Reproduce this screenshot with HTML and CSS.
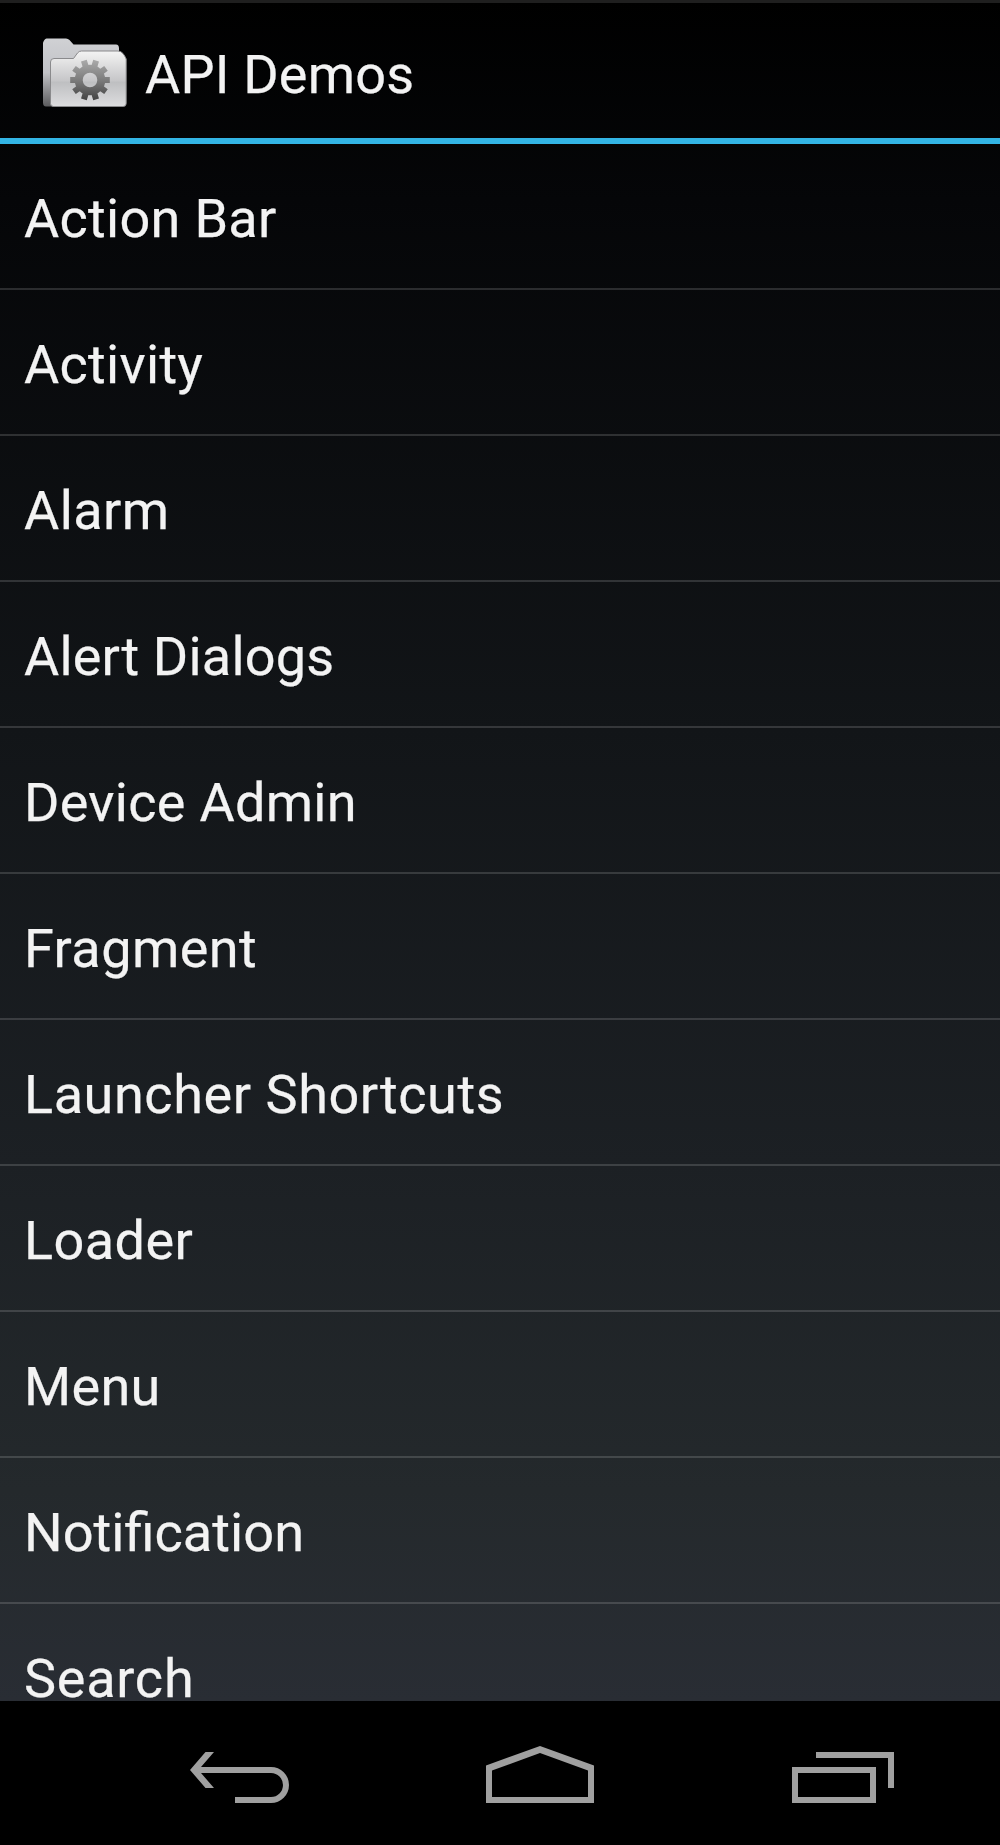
FILE: index.html
```html
<!DOCTYPE html>
<html lang="en">
<head>
<meta charset="utf-8">
<title>API Demos</title>
<link rel="stylesheet" href="styles.css">
</head>
<body>
<div class="screen">
  <header class="action-bar">
    <svg class="app-icon" viewBox="40 35 90 75" aria-hidden="true">
      <defs>
        <linearGradient id="back" x1="0" y1="0" x2="0" y2="1">
          <stop offset="0" stop-color="#d0d1d4"/><stop offset=".5" stop-color="#c2c3c7"/><stop offset="1" stop-color="#5c5c5e"/>
        </linearGradient>
        <linearGradient id="front" x1="0" y1="0" x2="0" y2="1">
          <stop offset="0" stop-color="#f4f4f4"/><stop offset=".3" stop-color="#dadadb"/><stop offset=".54" stop-color="#c6c6c8"/><stop offset=".56" stop-color="#bebfc1"/><stop offset="1" stop-color="#dddddf"/>
        </linearGradient>
        <linearGradient id="gear" gradientUnits="userSpaceOnUse" x1="0" y1="60" x2="0" y2="100">
          <stop offset="0" stop-color="#aaa"/><stop offset=".5" stop-color="#7c7c7c"/><stop offset="1" stop-color="#434343"/>
        </linearGradient>
      </defs>
      <path fill="url(#back)" d="M46.500 38.500H66q2 0 3.500 1.500l4 4.500H116q3 0 3 4V106.500H46q-3 0-3-4V43q1-4 3.500-4.500z"/>
      <path fill="url(#front)" stroke="#8a8a8c" stroke-width="1" d="M54 58.500H73.500l4-5.500q1.500-2 4-2H118q3 0 5 2.500t3.200 5.500V103.500q0 3-3 3H53.500q-3 0-3-3V62q0-3.500 3.500-3.500z"/>
      <!-- ten rounded teeth around a ring -->
      <g fill="none" stroke="url(#gear)">
        <circle cx="90" cy="80" r="11.300" stroke-width="8"/>
        <path stroke-width="6" d="M76 80.010H70.200M104 80H109.800M78.700 88.200L74 91.600M101.300 71.800L106 68.400M85.700 93.300L83.900 99.300M94.300 66.700L96.100 60.700M94.300 93.300L96.100 99.300M85.700 66.700L83.900 60.700M101.300 88.200L106 91.600M78.700 71.800L74 68.400"/>
      </g>
    </svg>
    <h1 class="title">API Demos</h1>
  </header>
  <ul class="list">
    <li class="row">Action Bar</li>
    <li class="row">Activity</li>
    <li class="row wide">Alarm</li>
    <li class="row tight">Alert Dialogs</li>
    <li class="row">Device Admin</li>
    <li class="row wide">Fragment</li>
    <li class="row wider">Launcher Shortcuts</li>
    <li class="row wide">Loader</li>
    <li class="row">Menu</li>
    <li class="row ligature">Notification</li>
    <li class="row widest">Search</li>
  </ul>
</div>
<nav class="nav-bar">
  <svg class="back" width="99" height="144" viewBox="0 0 99 144" role="img" aria-label="Back">
    <path fill="#a0a0a0" d="M0 69L15.500 51H24L11 66H81a18 18 0 0 1 0 36H45V96H81a12 12 0 0 0 0-24H11L24 87H15.500z"/>
  </svg>
  <svg class="home" width="108" height="144" viewBox="0 0 108 144" role="img" aria-label="Home">
    <path fill="#a0a0a0" fill-rule="evenodd" d="M54 45L108 64.500V102H0V64.500zM54 52L6 69.500V96H102V69.500z"/>
  </svg>
  <svg width="102" height="144" viewBox="0 0 102 144" role="img" aria-label="Recent apps">
    <path fill="#a0a0a0" fill-rule="evenodd" d="M0 66H84V102H0zM6 72V96H78V72zM24 51H102V87H96V57H24z"/>
  </svg>
</nav>
</body>
</html>
```
FILE: styles.css
```css
* { box-sizing: border-box; }
body {
  margin: 0;
  width: 1000px;
  height: 1845px;
  overflow: hidden;
  background: #000;
  color: #f3f3f3;
  font-family: Roboto, sans-serif;
  font-size: 54px;
  -webkit-text-stroke: .25px #f3f3f3;
}
.screen {
  height: 1701px;
  overflow: hidden;
  background: linear-gradient(#000 0, #050608 200px, #121518 730px, #1c2024 1164px, #24292c 1490px, #292d34 1701px);
}
.action-bar {
  display: flex;
  align-items: center;
  height: 144px;
  padding-left: 40px;
  border-top: 3px solid #1f1f1f;
  border-bottom: 6px solid #33b5e5;
}
.app-icon { width: 90px; height: 75px; margin-top: 4px; }
.title {
  margin: 8px 0 0 15px;
  font-size: 54px;
  font-weight: 400;
  line-height: 63px;
  letter-spacing: .2px;
}
.list { margin: 0; padding: 0; list-style: none; }
.row {
  height: 146px;
  padding: 5px 0 0 24px;
  line-height: 139px;
  letter-spacing: .3px;
  border-bottom: 2px solid rgba(255, 255, 255, .15);
}
.tight { letter-spacing: .2px; }
.wide { letter-spacing: .45px; }
.wider { letter-spacing: .57px; }
.widest { letter-spacing: .75px; }
.ligature { letter-spacing: 0; word-spacing: 0; font-size: 54.2px; }
.nav-bar {
  display: flex;
  height: 144px;
  padding-left: 190px;
}
.back { margin-right: 197px; }
.home { margin-right: 198px; }
```
